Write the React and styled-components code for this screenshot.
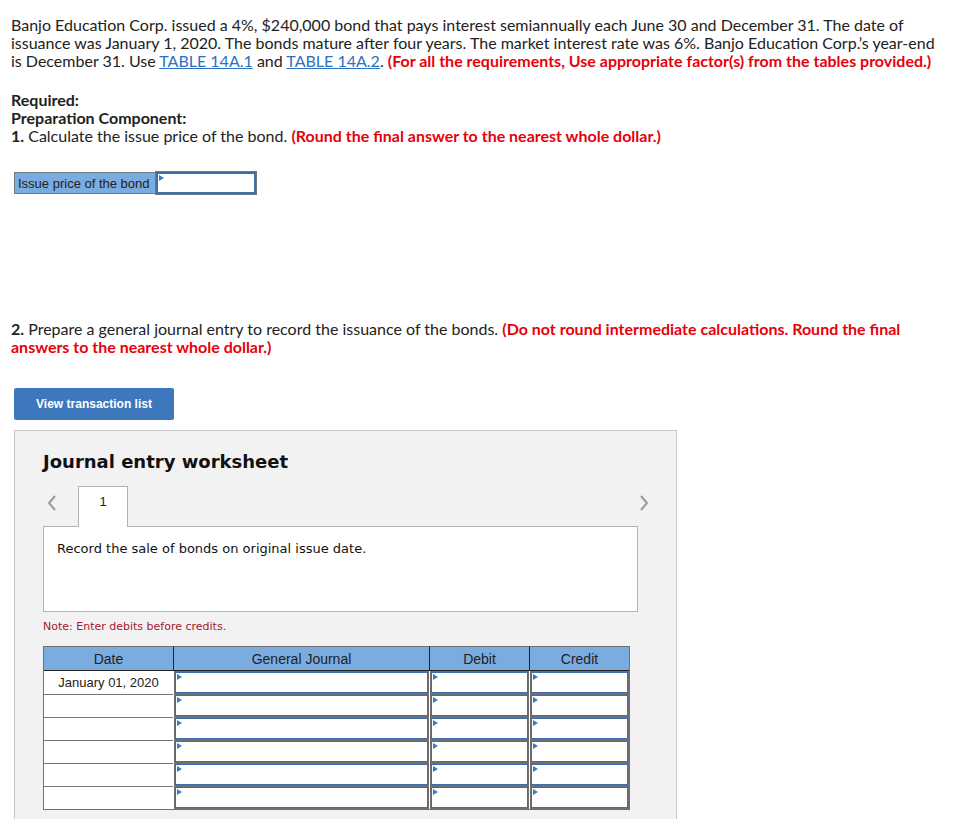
import React from 'react';
import styled, { createGlobalStyle } from 'styled-components';

const Global = createGlobalStyle`
  body {
    margin: 0;
    background: #fff;
    font-family: Lato, "Open Sans", sans-serif;
    color: #222;
  }
`;

const Page = styled.div`
  padding: 16px 11px 10px 11px;
  width: 953px;
  box-sizing: border-box;
`;

const Para = styled.p`
  margin: ${(p) => p.mt || 0}px 0 0 0;
  font-size: 16px;
  line-height: 18px;
  color: #222;
`;

const Red = styled.span`
  color: #e8000b;
  font-weight: 700;
`;

const Strong = styled.b`
  font-weight: 700;
`;

const Link = styled.a`
  color: #2a72bf;
  text-decoration: underline;
`;

const IssueRow = styled.div`
  display: flex;
  margin: 27px 0 0 3px;
  height: 22px;
  width: 242px;
`;

const IssueLabel = styled.div`
  width: 142px;
  box-sizing: border-box;
  background: #7aacdf;
  border: 1px solid #6d7a86;
  border-right: none;
  font-family: "Liberation Sans", Arial, sans-serif;
  font-size: 13px;
  color: #222;
  padding: 0 0 0 3px;
  display: flex;
  align-items: center;
  white-space: nowrap;
`;

const Marker = styled.span`
  position: absolute;
  left: 1px;
  top: 1px;
  width: 0;
  height: 0;
  border-top: 3px solid transparent;
  border-bottom: 3px solid transparent;
  border-left: 5px solid #3b7bc4;
`;

const IssueInput = styled.div`
  position: relative;
  flex: 1;
  background: #fff;
  border: 2px solid #3f6fa8;
  outline: 1px solid #6d7a86;
  box-sizing: border-box;
`;

const Button = styled.div`
  margin: 32px 0 0 3px;
  width: 160px;
  height: 32px;
  background: #3d77bc;
  border-radius: 2px;
  color: #fff;
  font-family: "Liberation Sans", Arial, sans-serif;
  font-weight: 700;
  font-size: 12px;
  display: flex;
  align-items: center;
  justify-content: center;
`;

const Panel = styled.div`
  margin: 10px 0 0 3px;
  width: 663px;
  height: 389px;
  box-sizing: border-box;
  background: #f2f2f2;
  border: 1px solid #c8c8c8;
  border-bottom: none;
  padding: 20px 38px 0 28px;
  font-family: "DejaVu Sans", Verdana, sans-serif;
`;

const Heading = styled.h2`
  margin: 0;
  font-size: 18px;
  line-height: 22px;
  font-weight: 700;
  color: #111;
`;

const TabRow = styled.div`
  display: flex;
  align-items: center;
  height: 40px;
  margin-top: 13px;
`;

const Arrow = styled.div`
  width: 35px;
  display: flex;
  align-items: center;
  justify-content: ${(p) => (p.right ? 'flex-end' : 'flex-start')};
  padding-left: ${(p) => (p.right ? 0 : 4)}px;
  margin-left: ${(p) => (p.right ? 'auto' : 0)};
  margin-right: ${(p) => (p.right ? -11 : 0)}px;
  height: 100%;
  padding-bottom: 6px;
  box-sizing: border-box;
`;

const Tab = styled.div`
  width: 50px;
  height: 41px;
  margin-bottom: -1px;
  box-sizing: border-box;
  background: #fff;
  border: 1px solid #b3b3b3;
  border-bottom: none;
  display: flex;
  justify-content: center;
  padding-top: 7px;
  font-family: "Liberation Sans", Arial, sans-serif;
  font-size: 13px;
  color: #222;
  position: relative;
  z-index: 1;
`;

const Prompt = styled.div`
  height: 86px;
  box-sizing: border-box;
  background: #fff;
  border: 1px solid #b3b3b3;
  padding: 14px 13px;
  font-size: 13px;
  color: #111;
`;

const Note = styled.div`
  margin-top: 8px;
  font-size: 11px;
  color: #a3182e;
`;

const Table = styled.div`
  margin-top: 13px;
  width: 585px;
  display: grid;
  grid-template-columns: 129px 256px 100px 100px;
  grid-template-rows: 25px repeat(6, 23px);
  border: 1px solid #6f6f6f;
  border-top: none;
  font-family: "Liberation Sans", Arial, sans-serif;
  font-size: 13px;
  color: #222;
  background: #fff;
`;

const Head = styled.div`
  background: #7aacdf;
  border-top: 1px solid #6f6f6f;
  border-bottom: 1px solid #222;
  border-left: ${(p) => (p.first ? 'none' : '1px solid #222')};
  display: flex;
  align-items: center;
  justify-content: center;
  box-sizing: border-box;
  font-size: 14px;
`;

const DateCell = styled.div`
  border-top: ${(p) => (p.first ? 'none' : '1px solid #777')};
  display: flex;
  align-items: center;
  justify-content: center;
  box-sizing: border-box;
`;

const InputCell = styled.div`
  position: relative;
  border: 2px solid #3e6fac;
  outline: 1px solid #6f6f6f;
  outline-offset: -1px;
  box-sizing: border-box;
  background: #fff;
  margin-left: 1px;
`;

const Chevron = ({ dir }) => (
  <svg width="10" height="16" viewBox="0 0 10 16">
    <path
      d={dir === 'left' ? 'M8 1 L2 8 L8 15' : 'M2 1 L8 8 L2 15'}
      fill="none"
      stroke="#999"
      strokeWidth="2"
    />
  </svg>
);

const rows = ['January 01, 2020', '', '', '', '', ''];

const App = () => {
  return (
    <Page>
      <Global />
      <Para>
        Banjo Education Corp. issued a 4%, $240,000 bond that pays interest semiannually each June 30 and December 31. The date of
        issuance was January 1, 2020. The bonds mature after four years. The market interest rate was 6%. Banjo Education Corp.’s year-end
        is December 31. Use <Link href="#">TABLE 14A.1</Link> and <Link href="#">TABLE 14A.2</Link>.{' '}
        <Red>(For all the requirements, Use appropriate factor(s) from the tables provided.)</Red>
      </Para>
      <Para mt={21}>
        <Strong>Required:</Strong>
        <br />
        <Strong>Preparation Component:</Strong>
        <br />
        <Strong>1.</Strong> Calculate the issue price of the bond.{' '}
        <Red>(Round the final answer to the nearest whole dollar.)</Red>
      </Para>
      <IssueRow>
        <IssueLabel>Issue price of the bond</IssueLabel>
        <IssueInput>
          <Marker />
        </IssueInput>
      </IssueRow>
      <Para mt={126}>
        <Strong>2.</Strong> Prepare a general journal entry to record the issuance of the bonds.{' '}
        <Red>(Do not round intermediate calculations. Round the final answers to the nearest whole dollar.)</Red>
      </Para>
      <Button>View transaction list</Button>
      <Panel>
        <Heading>Journal entry worksheet</Heading>
        <TabRow>
          <Arrow>
            <Chevron dir="left" />
          </Arrow>
          <Tab>1</Tab>
          <Arrow right>
            <Chevron dir="right" />
          </Arrow>
        </TabRow>
        <Prompt>Record the sale of bonds on original issue date.</Prompt>
        <Note>Note: Enter debits before credits.</Note>
        <Table>
          <Head first>Date</Head>
          <Head>General Journal</Head>
          <Head>Debit</Head>
          <Head>Credit</Head>
          {rows.map((d, i) => (
            <React.Fragment key={i}>
              <DateCell first={i === 0}>{d}</DateCell>
              <InputCell>
                <Marker />
              </InputCell>
              <InputCell>
                <Marker />
              </InputCell>
              <InputCell>
                <Marker />
              </InputCell>
            </React.Fragment>
          ))}
        </Table>
      </Panel>
    </Page>
  );
};

export default App;
